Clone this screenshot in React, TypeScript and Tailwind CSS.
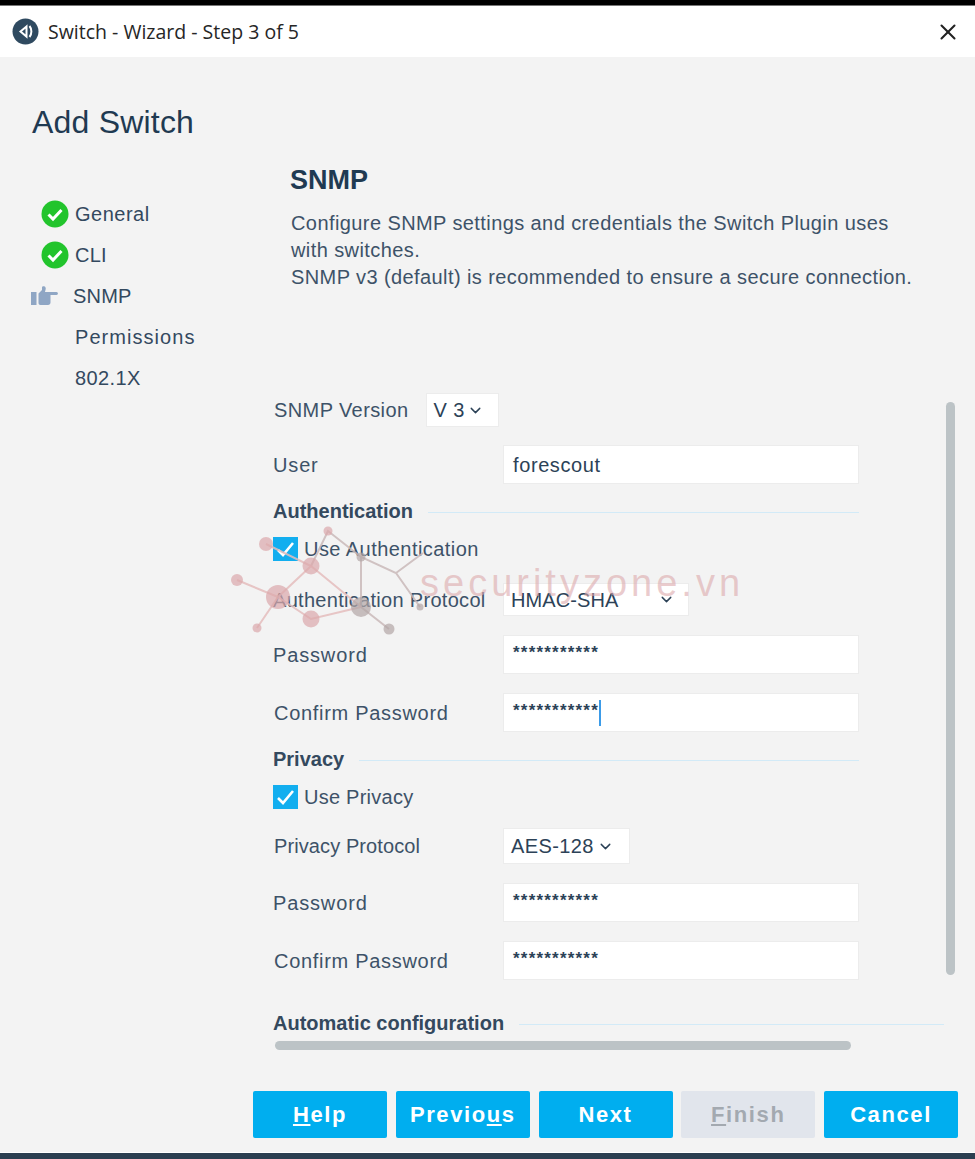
import { ChevronDown, X } from "lucide-react";
import type { ReactNode } from "react";

const sans = "font-['Liberation_Sans',Arial,sans-serif]";

function StepCheck() {
  return (
    <svg width="28" height="28" viewBox="0 0 28 28" className="shrink-0">
      <circle cx="14" cy="14" r="13.5" fill="#22c42c" />
      <path d="M7.5 14.5l4.5 4.5 8.5-9" fill="none" stroke="#fff" strokeWidth="3" />
    </svg>
  );
}

function PointerIcon() {
  return (
    <svg width="27" height="19" viewBox="0 0 27 19" className="shrink-0">
      <rect x="0" y="6" width="5.5" height="13" fill="#8fa6c4" />
      <path
        d="M7.5 7.5L11 4V1.5C11 .5 12 0 13 .2 14.5.6 15 2 14.6 3.5L14 6H25.5C27.4 6 27.4 9 25.5 9H19.5V16.5C19.5 18 18.5 19 17 19H9.5C8.3 19 7.5 18.2 7.5 17z"
        fill="#8fa6c4"
      />
    </svg>
  );
}

function Step({ label, icon, tracking }: { label: string; icon?: ReactNode; tracking: string }) {
  return (
    <div className="h-[41px] flex items-center">
      <div className="w-[34px] flex justify-start shrink-0">{icon}</div>
      <span className={`text-[20px] text-[#33495f] ${tracking}`}>{label}</span>
    </div>
  );
}

function Row({
  label,
  className,
  labelClass = "tracking-[0.85px]",
  children,
}: {
  label: string;
  className: string;
  labelClass?: string;
  children?: ReactNode;
}) {
  return (
    <div className={`flex items-center ${className}`}>
      <label className={`text-[20px] text-[#3d5268] whitespace-nowrap ${labelClass}`}>{label}</label>
      {children}
    </div>
  );
}

function TextBox({ value }: { value: string }) {
  return (
    <div className="w-[356px] h-[39px] bg-white border border-[#ececec] px-[9px] flex items-center text-[#2c4257] text-[20px] tracking-[0.6px]">
      {value}
    </div>
  );
}

function Secret({ caret }: { caret?: boolean }) {
  return (
    <div className="w-[356px] h-[39px] bg-white border border-[#ececec] pl-[9px] flex items-center">
      <span className="text-[17px] leading-[26px] font-bold tracking-[1.2px] text-[#2c4257] h-[26px] mt-[-4px]">***********</span>
      {caret && <span className="w-[2px] h-[26px] bg-[#3b9be8]" />}
    </div>
  );
}

function Dropdown({ value, className, gap }: { value: string; className: string; gap: string }) {
  return (
    <div className={`bg-white border border-[#ececec] flex items-center pl-[7px] text-[20px] text-[#2c4257] ${className}`}>
      <span>{value}</span>
      <ChevronDown size={17} strokeWidth={2} className={gap} />
    </div>
  );
}

function Heading({ title, className, line }: { title: string; className: string; line: string }) {
  return (
    <div className={`h-[24px] flex items-center ${className}`}>
      <h3 className="text-[20px] font-bold text-[#34495e] whitespace-nowrap">{title}</h3>
      <div className={`h-px mt-[3px] bg-[#d2eaf7] ml-[15px] ${line}`} />
    </div>
  );
}

function CheckRow({ label, className, labelClass }: { label: string; className: string; labelClass: string }) {
  return (
    <div className={`h-[24px] flex items-center ${className}`}>
      <div className="w-[25px] h-[24px] bg-[#12aeef] flex items-center justify-center">
        <svg width="19" height="17" viewBox="0 0 19 17">
          <path d="M2 9l5 5L17 2" fill="none" stroke="#fff" strokeWidth="2.6" />
        </svg>
      </div>
      <span className={`ml-[6px] text-[20px] text-[#3d5268] ${labelClass}`}>{label}</span>
    </div>
  );
}

function WizardButton({ children, disabled }: { children: ReactNode; disabled?: boolean }) {
  return (
    <button
      type="button"
      disabled={disabled}
      className={`w-[134px] h-[47px] rounded-[2px] text-[22px] font-bold tracking-[1.6px] ${disabled ? "bg-[#e1e5ec] text-[#a3a9b0]" : "bg-[#00aeef] text-white"}`}
    >
      {children}
    </button>
  );
}

export default function App() {
  return (
    <div className={`relative w-[975px] h-[1159px] overflow-hidden flex flex-col bg-[#f3f3f3] ${sans}`}>
      <div className="h-[6px] bg-black border-b border-[#777]" />

      <div className="h-[51px] bg-white flex items-center pl-[12px] pr-[14px]">
        <svg width="27" height="27" viewBox="0 0 27 27">
          <circle cx="13.5" cy="13.5" r="13" fill="#2f4a60" />
          <path d="M14.5 8.5l-6 5 6 5z" fill="none" stroke="#fff" strokeWidth="2" />
          <path d="M17.5 8c2.5 3 2.5 8 0 11" fill="none" stroke="#fff" strokeWidth="2" />
        </svg>
        <span className="ml-[9px] font-['Open_Sans',sans-serif] text-[19.5px] text-[#262626]">Switch - Wizard - Step 3 of 5</span>
        <X size={26} strokeWidth={1.9} className="ml-auto text-[#222]" />
      </div>

      <div className="h-[336px] flex shrink-0">
        <aside className="w-[273px] shrink-0 pl-[32px]">
          <h1 className="mt-[45px] text-[32px] leading-[40px] tracking-[0.2px] text-[#1f3a52]">Add Switch</h1>
          <nav className="mt-[51px] ml-[9px]">
            <Step label="General" icon={<StepCheck />} tracking="tracking-[0.5px]" />
            <Step label="CLI" icon={<StepCheck />} tracking="tracking-[0.2px]" />
            <div className="h-[41px] flex items-center ml-[-10px]">
              <PointerIcon />
              <span className="ml-[15px] text-[20px] tracking-[0.2px] text-[#33495f]">SNMP</span>
            </div>
            <Step label="Permissions" tracking="tracking-[1.05px]" />
            <Step label="802.1X" tracking="tracking-[0.4px]" />
          </nav>
        </aside>
        <section className="pl-[17px] pt-[106px]">
          <h2 className="text-[27px] leading-[34px] font-bold text-[#1f3a52]">SNMP</h2>
          <p className="mt-[13px] ml-[1px] text-[20px] leading-[27px] tracking-[0.41px] text-[#3d5268] whitespace-nowrap">
            Configure SNMP settings and credentials the Switch Plugin uses
            <br />
            with switches.
            <br />
            SNMP v3 (default) is recommended to ensure a secure connection.
          </p>
        </section>
      </div>

      <div className="pl-[273px] flex">
        <div className="w-[586px] shrink-0 flex flex-col">
          <Row label="SNMP Version" className="h-[34px]" labelClass="tracking-[0.4px] ml-px">
            <Dropdown value="V 3" className="ml-[17px] w-[73px] h-[34px] tracking-[0.4px]" gap="ml-[2px]" />
          </Row>
          <Row label="User" className="h-[39px] mt-[18px] justify-between">
            <TextBox value="forescout" />
          </Row>
          <Heading title="Authentication" className="mt-[15px]" line="flex-1" />
          <CheckRow label="Use Authentication" className="mt-[14px]" labelClass="tracking-[0.45px]" />
          <Row label="Authentication Protocol" className="h-[33px] mt-[22px] justify-between" labelClass="tracking-[0.3px]">
            <Dropdown value="HMAC-SHA" className="w-[186px] h-[33px] mr-[170px] tracking-[0.1px]" gap="ml-[40px]" />
          </Row>
          <Row label="Password" className="h-[39px] mt-[19px] justify-between">
            <Secret />
          </Row>
          <Row label="Confirm Password" className="h-[39px] mt-[19px] justify-between" labelClass="tracking-[0.7px] ml-px">
            <Secret caret />
          </Row>
          <Heading title="Privacy" className="mt-[15px]" line="flex-1" />
          <CheckRow label="Use Privacy" className="mt-[14px]" labelClass="tracking-[0.25px]" />
          <Row label="Privacy Protocol" className="h-[36px] mt-[19px] justify-between" labelClass="tracking-[0.1px] ml-px">
            <Dropdown value="AES-128" className="w-[127px] h-[36px] mr-[229px] tracking-[0.4px]" gap="ml-[3px]" />
          </Row>
          <Row label="Password" className="h-[39px] mt-[19px] justify-between">
            <Secret />
          </Row>
          <Row label="Confirm Password" className="h-[39px] mt-[19px] justify-between" labelClass="tracking-[0.7px] ml-px">
            <Secret />
          </Row>
        </div>
        <div className="ml-[87px] mt-[9px] w-[9px] h-[573px] rounded-full bg-[#bcc3c6]" />
      </div>

      <div className="pl-[273px] pr-[31px] mt-[31px]">
        <Heading title="Automatic configuration" className="" line="flex-1" />
      </div>
      <div className="ml-[275px] mt-[6px] w-[576px] h-[9px] rounded-full bg-[#bcc3c6]" />

      <div className="mt-[41px] pr-[17px] flex justify-end gap-[8.75px]">
        <WizardButton><u>H</u>elp</WizardButton>
        <WizardButton>Previo<u>u</u>s</WizardButton>
        <WizardButton>Next</WizardButton>
        <WizardButton disabled><u>F</u>inish</WizardButton>
        <WizardButton>Cancel</WizardButton>
      </div>

      <div className="mt-auto h-[7px] bg-[#2b3e50] border-t border-white" />

      {/* watermark sits over the form */}
      <svg className="absolute left-0 top-0 pointer-events-none" width="975" height="1159" viewBox="0 0 975 1159">
        <g stroke="#c9b9b9" strokeWidth="2" fill="none" opacity="0.85">
          <path d="M311 566L328 531L361 557L396 573L420 607M396 573L423 553M361 557V607L389 629" />
        </g>
        <g stroke="#e4bcbc" strokeWidth="2" fill="none" opacity="0.85">
          <path d="M266 544L311 566L278 597L237 580M278 597L257 628M311 566L361 607M278 597L311 619L361 607" />
        </g>
        <g fill="#dca9ac" opacity="0.7">
          <circle cx="266" cy="544" r="7" />
          <circle cx="311" cy="566" r="8.5" />
          <circle cx="278" cy="597" r="12" />
          <circle cx="237" cy="580" r="6" />
          <circle cx="257" cy="628" r="4.5" />
          <circle cx="311" cy="619" r="8.5" />
          <circle cx="328" cy="531" r="4.5" />
        </g>
        <g fill="#b3a7a7" opacity="0.7">
          <circle cx="361" cy="557" r="4.5" />
          <circle cx="361" cy="607" r="10" />
          <circle cx="389" cy="629" r="5.5" />
          <circle cx="420" cy="607" r="3.5" />
        </g>
      </svg>
      <span className="absolute left-[420px] top-[561px] text-[38px] leading-[44px] tracking-[4px] text-[#dca9ac]/60 pointer-events-none">
        securityzone.vn
      </span>
    </div>
  );
}
